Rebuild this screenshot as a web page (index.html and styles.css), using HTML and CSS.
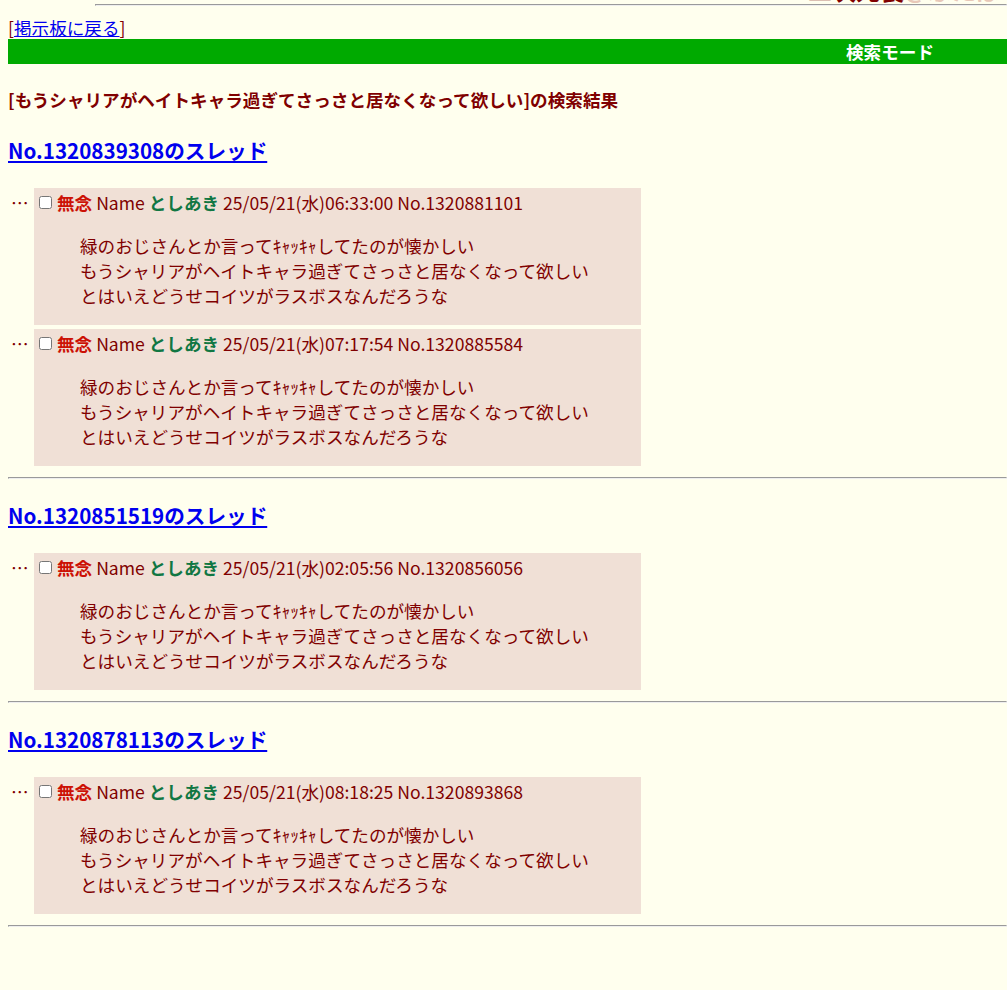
FILE: index.html
```html
<!DOCTYPE html>
<html lang="ja">
	<head>
		<meta charset="utf-8" />
		<title>検索モード</title>
		<link rel="stylesheet" href="styles.css">
	</head>
	<body>
		<div class="top">
			<div class="logo">二次元裏<span class="logo-sub">＠ふたば</span></div>
			<hr class="top-rule" />
		</div>
		<div class="back">[<a href="#">掲示板に戻る</a>]</div>
		<div class="modebar"><span>検索モード</span></div>
		<p class="query">[もうシャリアがヘイトキャラ過ぎてさっさと居なくなって欲しい]の検索結果</p>

		<div class="thread">
			<h3><a href="#">No.1320839308のスレッド</a></h3>
			<div class="row">
				<span class="dots">…</span>
				<div class="reply">
					<div class="meta"><input type="checkbox" /><span class="sub">無念</span> Name <span class="name">としあき</span> 25/05/21(水)06:33:00 No.1320881101</div>
					<blockquote>緑のおじさんとか言ってｷｬｯｷｬしてたのが懐かしい<br />もうシャリアがヘイトキャラ過ぎてさっさと居なくなって欲しい<br />とはいえどうせコイツがラスボスなんだろうな</blockquote>
				</div>
			</div>
			<div class="row">
				<span class="dots">…</span>
				<div class="reply">
					<div class="meta"><input type="checkbox" /><span class="sub">無念</span> Name <span class="name">としあき</span> 25/05/21(水)07:17:54 No.1320885584</div>
					<blockquote>緑のおじさんとか言ってｷｬｯｷｬしてたのが懐かしい<br />もうシャリアがヘイトキャラ過ぎてさっさと居なくなって欲しい<br />とはいえどうせコイツがラスボスなんだろうな</blockquote>
				</div>
			</div>
		</div>
		<hr />

		<div class="thread">
			<h3><a href="#">No.1320851519のスレッド</a></h3>
			<div class="row">
				<span class="dots">…</span>
				<div class="reply">
					<div class="meta"><input type="checkbox" /><span class="sub">無念</span> Name <span class="name">としあき</span> 25/05/21(水)02:05:56 No.1320856056</div>
					<blockquote>緑のおじさんとか言ってｷｬｯｷｬしてたのが懐かしい<br />もうシャリアがヘイトキャラ過ぎてさっさと居なくなって欲しい<br />とはいえどうせコイツがラスボスなんだろうな</blockquote>
				</div>
			</div>
		</div>
		<hr />

		<div class="thread">
			<h3><a href="#">No.1320878113のスレッド</a></h3>
			<div class="row">
				<span class="dots">…</span>
				<div class="reply">
					<div class="meta"><input type="checkbox" /><span class="sub">無念</span> Name <span class="name">としあき</span> 25/05/21(水)08:18:25 No.1320893868</div>
					<blockquote>緑のおじさんとか言ってｷｬｯｷｬしてたのが懐かしい<br />もうシャリアがヘイトキャラ過ぎてさっさと居なくなって欲しい<br />とはいえどうせコイツがラスボスなんだろうな</blockquote>
				</div>
			</div>
		</div>
		<hr />
	</body>
</html>
```

FILE: styles.css
```css
body {
	margin: 0 0 0 8px;
	background-color: #ffffee;
	color: #800000;
	font-family: "Noto Sans CJK JP", "Noto Sans", sans-serif;
	font-size: 17.6px;
	line-height: 25px;
	overflow: hidden;
}
a {
	color: #0000ee;
}
.top {
	margin-top: -20px;
}
.logo {
	height: 24px;
	text-align: right;
	padding-right: 7px;
	font-size: 24px;
	line-height: 19px;
	font-weight: bold;
	color: #800000;
}
.logo-sub {
	color: #e8c8b8;
}
.top-rule {
	margin: 0 0 0 87px;
}
.back {
	margin-top: 11px;
	line-height: 22px;
}
.modebar {
	background-color: #00aa00;
	color: #ffffff;
	font-weight: bold;
	height: 25px;
	line-height: 25px;
	padding-left: 838px;
}
.query {
	font-weight: bold;
	margin: 23px 0 24px 0;
}
h3 {
	font-size: 20.6px;
	line-height: 28px;
	margin: 22px 0 24px 0;
}
.row {
	display: flex;
	align-items: flex-start;
	margin-bottom: 4px;
}
.dots {
	width: 26px;
	padding-left: 3px;
	padding-top: 2px;
	box-sizing: border-box;
}
.reply {
	width: 607px;
	background-color: #f0e0d6;
	padding-top: 2px;
}
.meta {
	display: flex;
	align-items: center;
	white-space: pre;
}
.meta input {
	width: 13px;
	height: 13px;
	margin: 0 5px 0 5px;
}
.sub {
	color: #cc1105;
	font-weight: bold;
}
.name {
	color: #117743;
	font-weight: bold;
}
blockquote {
	margin: 18px 0 17px 46px;
}
hr {
	margin: 11px 0 0 0;
}
```
